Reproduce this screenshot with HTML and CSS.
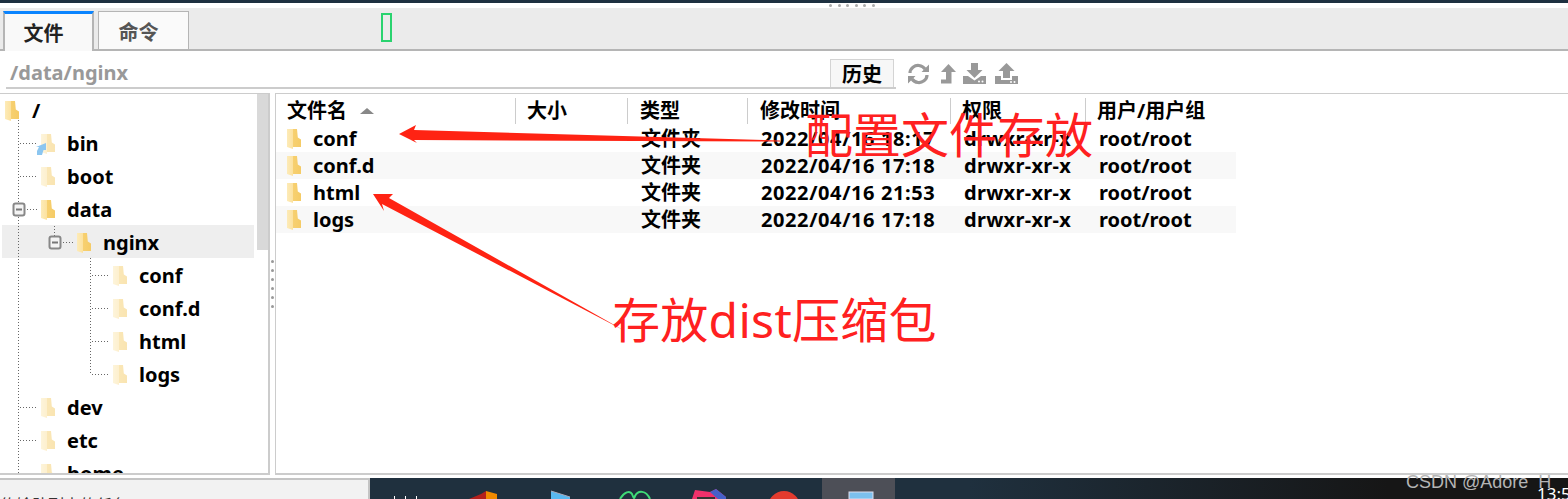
FILE: index.html
```html
<!DOCTYPE html>
<html>
<head>
<meta charset="utf-8">
<title>文件</title>
<link rel="stylesheet" href="styles.css">
</head>
<body>
<svg class="defs" width="0" height="0">
<defs>
<linearGradient id="folderfill" x1="0" y1="0" x2="1" y2="0">
<stop offset="0" stop-color="#fdebb8"/>
<stop offset=".4" stop-color="#fce2a0"/>
<stop offset=".45" stop-color="#f7d070"/>
<stop offset="1" stop-color="#f5cb66"/>
</linearGradient>
</defs>
<symbol id="folder" viewBox="0 0 14 20">
<path d="M0 0H10L10.800 8.500L14 10.500V18H6V20L0 18Z" fill="url(#folderfill)"/>
</symbol>
</svg>

<div class="topbar"></div>
<div class="grip"><i></i><i></i><i></i><i></i><i></i><i></i></div>

<div class="tabs">
<div class="tab active">文件</div>
<div class="tab">命令</div>
<div class="tofu"></div>
</div>

<div class="pathbar">
<div class="path">
<span class="path-text">/data/nginx</span>
<button class="history">历史</button>
</div>
<div class="tools">
<svg class="tool-refresh" width="23" height="22" viewBox="0 0 23 22"><path d="M3 10C3 5 8 2 12 2.500C15 3 17 4.500 18 6M20 12C20 17 15 20 11 19.500C8 19 6 17.500 5 16" fill="none" stroke="#999" stroke-width="3.200"/><path d="M22 1.500V9H14.500ZM1 20.500V13H8.500Z" fill="#999"/></svg>
<svg width="15" height="20" viewBox="0 0 15 20"><path d="M7.500 0L15 8H10.500V19.500H0V15.500H5V8H0Z" fill="#999"/></svg>
<svg width="23" height="21" viewBox="0 0 23 21"><path d="M8 0H15V7H19.500L11.500 15L3.500 7H8Z" fill="#999"/><path d="M0 13H5L11.500 17.500L18 13H23V21H0Z" fill="#999"/><circle cx="16" cy="18.500" r="1" fill="#fff"/><circle cx="19.500" cy="18.500" r="1" fill="#fff"/></svg>
<svg class="tool-upload" width="23" height="21" viewBox="0 0 23 21"><path d="M11.500 0L19.500 8H15V15H8V8H3.500Z" fill="#999"/><path d="M0 13H6V17H17V13H23V21H0Z" fill="#999"/><circle cx="16" cy="19" r="1" fill="#fff"/><circle cx="19.500" cy="19" r="1" fill="#fff"/></svg>
</div>
</div>

<div class="main">
<div class="tree">
<div class="tree-list">
<div class="node lv0"><svg class="ico"><use href="#folder"/></svg>/</div>
<div class="node lv1 faded link"><svg class="ico"><use href="#folder"/></svg><svg class="shortcut" width="10" height="12" viewBox="0 0 10 12"><path d="M10 0V7H7.500L6 12H1V8L3 4H0Z" fill="#8cc6f0"/></svg>bin</div>
<div class="node lv1 faded"><svg class="ico"><use href="#folder"/></svg>boot</div>
<div class="node lv1"><svg class="ico"><use href="#folder"/></svg>data</div>
<div class="node lv2 selected"><svg class="ico"><use href="#folder"/></svg>nginx</div>
<div class="node lv3 faded"><svg class="ico"><use href="#folder"/></svg>conf</div>
<div class="node lv3 faded"><svg class="ico"><use href="#folder"/></svg>conf.d</div>
<div class="node lv3 faded"><svg class="ico"><use href="#folder"/></svg>html</div>
<div class="node lv3 faded"><svg class="ico"><use href="#folder"/></svg>logs</div>
<div class="node lv1 faded"><svg class="ico"><use href="#folder"/></svg>dev</div>
<div class="node lv1 faded"><svg class="ico"><use href="#folder"/></svg>etc</div>
<div class="node lv1 faded"><svg class="ico"><use href="#folder"/></svg>home</div>
</div>
<svg class="tree-lines" width="254" height="382" viewBox="0 93 254 382">
<g class="dots">
<path d="M18.500 120V203M18.500 217V475M54.500 226V236M90.500 258V374"/>
<path d="M20 143.500H37M20 176.500H37M27 209.500H37M63 242.500H73M20 407.500H37M20 440.500H37M20 473.500H37"/>
<path d="M92 275.500H109M92 308.500H109M92 341.500H109M92 374.500H109"/>
</g>
<g class="expander">
<rect x="13.500" y="203.500" width="11" height="12" rx="2"/><path d="M16 209.500H22"/>
<rect x="49.500" y="236.500" width="11" height="12" rx="2"/><path d="M52 242.500H58"/>
</g>
</svg>
<div class="scrollbar"></div>
</div>

<div class="splitter"><i></i><i></i><i></i><i></i><i></i><i></i></div>

<div class="files">
<div class="head">
<div class="col">文件名<span class="sort"></span></div>
<div class="col">大小</div>
<div class="col wide">类型</div>
<div class="col wide">修改时间</div>
<div class="col">权限</div>
<div class="col">用户/用户组</div>
</div>
<div class="row">
<div class="name"><svg class="ico"><use href="#folder"/></svg>conf</div><div></div><div>文件夹</div><div class="date">2022/04/16 18:17</div><div class="perm">drwxr-xr-x</div><div>root/root</div>
</div>
<div class="row">
<div class="name"><svg class="ico"><use href="#folder"/></svg>conf.d</div><div></div><div>文件夹</div><div class="date">2022/04/16 17:18</div><div class="perm">drwxr-xr-x</div><div>root/root</div>
</div>
<div class="row">
<div class="name"><svg class="ico"><use href="#folder"/></svg>html</div><div></div><div>文件夹</div><div class="date">2022/04/16 21:53</div><div class="perm">drwxr-xr-x</div><div>root/root</div>
</div>
<div class="row">
<div class="name"><svg class="ico"><use href="#folder"/></svg>logs</div><div></div><div>文件夹</div><div class="date">2022/04/16 17:18</div><div class="perm">drwxr-xr-x</div><div>root/root</div>
</div>
</div>
</div>

<div class="bottom">
<div class="status">传输队列中的任务</div>
<div class="taskbar">
<svg width="1198" height="21" viewBox="370 478 1198 21">
<path d="M394.500 496V499M405.500 496V499M416.500 496V499" stroke="#fff"/>
<path d="M469 499L481 494L486 491V499Z" fill="#b3201c"/><path d="M486 491L497 494V499H486Z" fill="#f08a00"/>
<path d="M551 491L570 497V499H551Z" fill="#59b8f0"/><path d="M551 491L570 497" stroke="#aab" fill="none"/>
<path d="M620 499C624 492 630 490 632 494C634 499 634 499 635 496C638 490 646 490 650 499" fill="none" stroke="#3fdc77" stroke-width="2"/>
<path d="M692 499L695 490L710 492L716 489L726 497V499Z" fill="#f0316b"/><path d="M710 492L716 489L726 497V499H718Z" fill="#4560c8"/><rect x="697" y="497" width="18" height="2" fill="#333"/>
<circle cx="784" cy="507" r="16" fill="#e33b2e"/>
<rect x="822" y="478" width="73" height="21" fill="#4d4f57"/>
<rect x="849" y="492" width="24" height="7" fill="#7cc0ee" stroke="#dde" stroke-width="1"/>
</svg>
<span class="clock">13:5</span>
</div>
</div>

<svg class="arrows" width="1568" height="499" viewBox="0 0 1568 499">
<path d="M399 134L416 125L414 130L780 140.500V141.500L414 140L417 143Z" fill="#ff2313"/>
<path d="M373 194L393 194L389 198L625 331L382 204L384 211Z" fill="#ff2313"/>
</svg>
<div class="note note-conf">配置文件存放</div>
<div class="note note-dist">存放dist压缩包</div>
<div class="mark">CSDN @Adore_H</div>
</body>
</html>
```

FILE: styles.css
```css
html,body
{
margin:0;
padding:0;
}
body
{
position:relative;
width:1568px;
height:499px;
overflow:hidden;
background:#fff;
font-family:"Noto Sans","Noto Sans CJK SC",sans-serif;
font-size:20px;
font-weight:700;
color:#000;
}
.defs
{
position:absolute;
}
.topbar
{
height:3px;
background:#1d3040;
}
.grip
{
height:5px;
display:flex;
align-items:center;
gap:5.5px;
padding-left:829px;
}
.grip i
{
width:3px;
height:3px;
border-radius:50%;
background:#aaa;
}
.tabs
{
height:41px;
background:#ebebeb;
border-bottom:2px solid #b5b5b5;
display:flex;
align-items:flex-end;
padding-left:3px;
}
.tab
{
box-sizing:border-box;
width:91px;
height:38px;
margin-right:4px;
padding-right:10px;
background:#fafafa;
border:1px solid #b5b5b5;
border-bottom:0;
color:#555;
text-align:center;
line-height:42px;
}
.tab.active
{
height:40px;
margin-bottom:-2px;
border:0;
border-left:2px solid #b5b5b5;
border-right:2px solid #b5b5b5;
border-top:3px solid #0a84ff;
background:#f9f9f9;
color:#222;
line-height:39px;
}
.tofu
{
width:7px;
height:25px;
margin:0 0 7px 188px;
border:2px solid #2ad36f;
}
.pathbar
{
height:42px;
display:flex;
align-items:flex-start;
}
.path
{
box-sizing:border-box;
width:890px;
height:38px;
margin-left:6px;
border-bottom:2px solid #ccc;
display:flex;
justify-content:space-between;
align-items:flex-end;
padding:0 2px 0 4px;
}
.path-text
{
color:#999;
line-height:28px;
}
.history
{
box-sizing:border-box;
width:64px;
height:28px;
padding:0;
border:1px solid #d4d4d4;
border-bottom:0;
background:#f7f7f7;
font:inherit;
color:#000;
line-height:30px;
}
.tools
{
display:flex;
align-items:center;
gap:7px;
height:45px;
margin-left:11px;
}
.tool-refresh
{
margin-right:4px;
}
.tool-upload
{
margin-left:2px;
}
.main
{
height:382px;
display:flex;
}
.tree
{
position:relative;
box-sizing:border-box;
width:270px;
border:1px solid #ccc;
border-left:0;
border-width:1px 2px 2px 0;
display:flex;
overflow:hidden;
}
.tree-lines
{
position:absolute;
left:0;
top:-1px;
}
.dots path
{
fill:none;
stroke:#666;
stroke-dasharray:1 2;
}
.expander rect
{
fill:#f4f4f4;
stroke:#888;
stroke-width:2;
}
.expander path
{
stroke:#777;
stroke-width:2;
}
.tree-list
{
width:254px;
margin-top:-1px;
flex-shrink:0;
}
.node
{
box-sizing:border-box;
position:relative;
height:33px;
padding-top:3px;
line-height:30px;
display:flex;
align-items:center;
margin-left:2px;
}
.ico
{
width:14px;
height:20px;
flex-shrink:0;
margin-right:12px;
}
.lv0
{
padding-left:3px;
}
.lv0 .ico
{
margin-right:13px;
}
.lv1
{
padding-left:39px;
}
.lv2
{
padding-left:75px;
}
.lv3
{
padding-left:111px;
}
.selected
{
background:#eee;
}
.faded .ico
{
opacity:.5;
}
.shortcut
{
position:absolute;
left:34px;
top:17px;
}
.scrollbar
{
width:12px;
height:156px;
margin-left:3px;
background:#d9d9d9;
}
.splitter
{
width:5px;
display:flex;
flex-direction:column;
justify-content:center;
align-items:flex-start;
gap:6px;
padding-left:1px;
box-sizing:border-box;
}
.splitter i
{
width:3px;
height:3px;
border-radius:50%;
background:#999;
}
.files
{
flex:1;
border-top:1px solid #ccc;
border-left:1px solid #ccc;
border-bottom:2px solid #ccc;
padding-top:4px;
}
.head,.row
{
display:grid;
grid-template-columns:240px 112px 120px 203px 135px 150px;
width:960px;
}
.head
{
height:22px;
line-height:26px;
margin-bottom:5px;
}
.col
{
box-sizing:border-box;
padding-left:11px;
border-right:1px solid #ccc;
display:flex;
align-items:center;
}
.col.wide
{
padding-left:12px;
}
.col:last-child
{
border-right:0;
}
.sort
{
width:0;
height:0;
margin-left:13px;
border-left:7px solid transparent;
border-right:7px solid transparent;
border-bottom:6px solid #888;
}
.row
{
height:27px;
line-height:28px;
white-space:nowrap;
}
.row>div
{
padding-left:13px;
}
.row .name
{
padding-left:11px;
display:flex;
align-items:center;
}
.row .date
{
letter-spacing:.6px;
}
.row .perm
{
letter-spacing:.3px;
}
.row:nth-of-type(odd)
{
background:#f8f8f8;
}
.bottom
{
height:24px;
display:flex;
overflow:hidden;
}
.status
{
box-sizing:border-box;
width:370px;
margin-top:3px;
background:#f2f2f2;
border-top:2px solid #c4c4c4;
border-right:2px solid #c4c4c4;
font-size:16px;
font-weight:400;
line-height:50px;
color:#333;
overflow:hidden;
}
.taskbar
{
position:relative;
flex:1;
margin-top:3px;
background:linear-gradient(90deg,#1f303e 0,#1f303e 50%,#161616 85%,#161616 100%);
overflow:hidden;
}
.taskbar svg
{
display:block;
}
.clock
{
position:absolute;
left:1167px;
top:4px;
font-size:17px;
font-weight:400;
line-height:24px;
color:#fff;
}
.arrows
{
position:absolute;
left:0;
top:0;
pointer-events:none;
}
.note
{
position:absolute;
font-size:48px;
font-weight:400;
line-height:60px;
color:#ff2020;
white-space:nowrap;
}
.note-conf
{
left:805px;
top:105px;
}
.note-dist
{
left:612px;
top:290px;
letter-spacing:.3px;
}
.mark
{
position:absolute;
left:1406px;
top:471px;
height:19px;
overflow:hidden;
font-family:"Liberation Sans",sans-serif;
font-size:18px;
font-weight:400;
line-height:22px;
color:#b4b4b4;
}
```
